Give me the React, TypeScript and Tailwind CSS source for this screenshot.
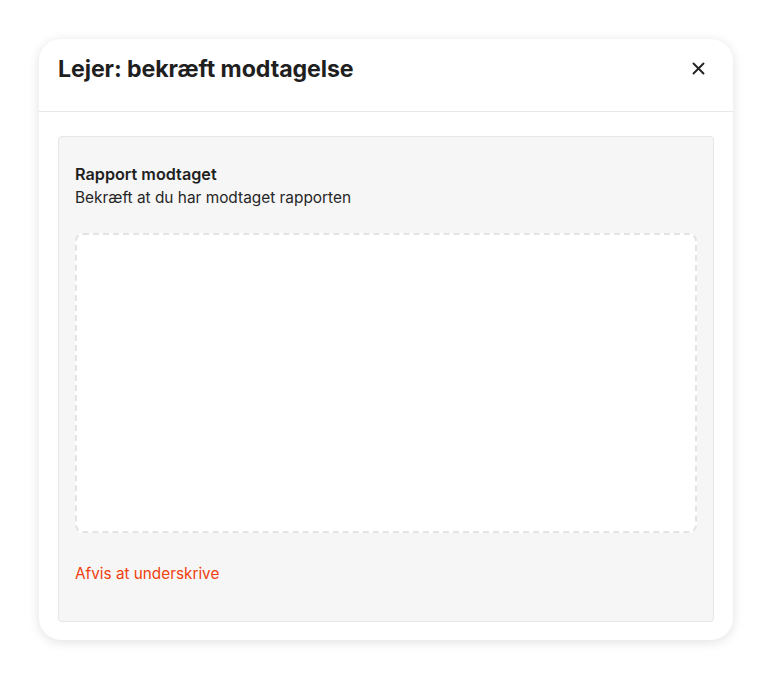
import React from "react";

export default function App() {
  return (
    <div className="min-h-[679px] bg-white p-[39px] pb-0" style={{ fontFamily: "Inter, 'Noto Sans', sans-serif" }}>
      <div className="flex h-[601px] w-[694px] flex-col rounded-[22px] bg-white shadow-[0_2px_12px_rgba(0,0,0,0.12)]">
        <div className="flex h-[73px] shrink-0 items-center justify-between border-b border-[#e8e8e8] pb-[10px] pl-[19px] pr-[28px]">
          <h1 className="text-[23.2px] font-bold leading-none tracking-[-0.1px] text-[#1f1f1f]">Lejer: bekræft modtagelse</h1>
          <button className="-mt-1 flex h-[14px] w-[14px] items-center justify-center text-[#222]">
            <svg width="13" height="13" viewBox="0 0 13 13" fill="none" stroke="currentColor" strokeWidth="1.9" strokeLinecap="round">
              <path d="M1.5 1.5l10 10M11.5 1.5l-10 10" />
            </svg>
          </button>
        </div>
        <div className="flex flex-1 flex-col px-[19px] pb-[18px] pt-[24px]">
          <div className="flex flex-1 flex-col rounded-[4px] border border-[#e6e6e6] bg-[#f6f6f6] px-4 pt-[25px]">
            <div className="text-[16.2px] font-semibold leading-6 text-[#1f1f1f]">Rapport modtaget</div>
            <div className="text-[15.4px] leading-6 text-[#262626]">Bekræft at du har modtaget rapporten</div>
            <div className="mt-[23px] h-[300px] rounded-[8px] border-2 border-dashed border-[#e4e4e4] bg-white"></div>
            <div className="mt-[29px] text-[15.3px] leading-6 text-[#f0400e]">Afvis at underskrive</div>
          </div>
        </div>
      </div>
    </div>
  );
}
